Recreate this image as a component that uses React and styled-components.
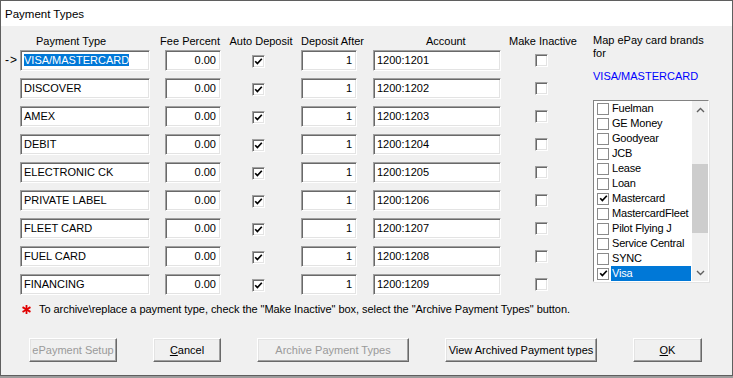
import React from 'react'
import styled, { createGlobalStyle } from 'styled-components'

const GlobalStyle = createGlobalStyle`
    body {
        margin: 0;
        background: #9c9c9c;
        font-family: "Liberation Sans", Arial, sans-serif;
    }
`

const Window = styled.div`
    box-sizing: border-box;
    width: 733px;
    height: 376px;
    border: 1px solid #5f5f5f;
    background: #f0f0f0;
    display: flex;
    flex-direction: column;
    font-size: 11px;
    color: #000;
`

const TitleBar = styled.div`
    height: 25px;
    background: #fff;
    display: flex;
    align-items: center;
    padding-left: 4px;
    font-size: 11.5px;
`

const Top = styled.div`
    display: flex;
    align-items: flex-start;
`

const Table = styled.div`
    display: grid;
    grid-template-columns: 19px 130px 71px 80px 56px 144px 84px;
    grid-template-rows: 24px;
    grid-auto-rows: 28px;
    align-items: start;
`

const Header = styled.div`
    align-self: end;
    line-height: 14px;
    padding-bottom: 2px;
    text-align: ${p => p.$left ? 'left' : 'center'};
    padding-left: ${p => p.$left ? '16px' : '0'};
    white-space: nowrap;
    grid-column: ${p => p.$col};
`

const Arrow = styled.div`
    line-height: 21px;
    padding-left: 4px;
    letter-spacing: 1px;
    font-size: 12px;
`

const Field = styled.div`
    box-sizing: border-box;
    width: ${p => p.$w}px;
    height: 21px;
    justify-self: ${p => p.$end ? 'end' : 'start'};
    background: #fff;
    border-top: 1px solid #a0a0a0;
    border-left: 1px solid #a0a0a0;
    border-bottom: 1px solid #fff;
    border-right: 1px solid #fff;
    box-shadow: inset 1px 1px #696969, inset -1px -1px #e3e3e3;
    padding: 0 4px 0 3px;
    line-height: 19px;
    text-align: ${p => p.$num ? 'right' : 'left'};
    white-space: nowrap;
    overflow: hidden;
`

const Selected = styled.span`
    background: #0078d7;
    color: #fff;
`

const Check = styled.div`
    box-sizing: border-box;
    width: 13px;
    height: 13px;
    background: #fff;
    border-top: 1px solid #a0a0a0;
    border-left: 1px solid #a0a0a0;
    border-bottom: 1px solid #fff;
    border-right: 1px solid #fff;
    box-shadow: inset 1px 1px #696969, inset -1px -1px #e3e3e3;
    display: flex;
    align-items: center;
    justify-content: center;
    justify-self: center;
    margin-top: ${p => p.$mt || 0}px;
    margin-right: ${p => p.$mr || 0}px;
    flex-shrink: 0;
`

const ListCheck = styled(Check)`
    width: 12px;
    height: 12px;
    border: 1px solid #8a8a8a;
    box-shadow: none;
`

const Side = styled.div`
    margin-left: 8px;
    width: 116px;
    padding-top: 8px;
    line-height: 13px;
`

const SelectedName = styled.div`
    color: #0000ff;
    margin-top: 10px;
`

const ListBox = styled.div`
    box-sizing: border-box;
    margin-top: 17px;
    width: 116px;
    height: 182px;
    background: #fff;
    border-top: 1px solid #828282;
    border-left: 1px solid #828282;
    border-bottom: 1px solid #fff;
    border-right: 1px solid #fff;
    box-shadow: 1px 1px 0 #e3e3e3;
    display: flex;
`

const Items = styled.div`
    flex: 1;
    min-width: 0;
`

const Item = styled.div`
    height: 15px;
    display: flex;
    align-items: center;
    padding-left: 3px;
`

const ItemLabel = styled.span`
    flex: 1;
    margin-left: 2px;
    margin-right: 1px;
    padding-left: 1px;
    line-height: 15px;
    white-space: nowrap;
    overflow: hidden;
    letter-spacing: -0.2px;
    background: ${p => p.$sel ? '#0078d7' : 'transparent'};
    color: ${p => p.$sel ? '#fff' : '#000'};
`

const ScrollBar = styled.div`
    width: 16px;
    background: #f0f0f0;
    display: flex;
    flex-direction: column;
    align-items: center;
`

const ScrollArrow = styled.div`
    height: 17px;
    display: flex;
    align-items: center;
    justify-content: center;
`

const Track = styled.div`
    flex: 1;
    width: 100%;
    display: flex;
    flex-direction: column;
`

const Thumb = styled.div`
    margin-top: 46px;
    height: 69px;
    background: #cdcdcd;
`

const Note = styled.div`
    display: flex;
    align-items: center;
    gap: 8px;
    padding-left: 21px;
    line-height: 13px;
    margin-top: 1px;
    letter-spacing: -0.05px;
`

const Buttons = styled.div`
    display: flex;
    gap: 36px;
    padding-left: 28px;
    margin-top: 22px;
`

const Button = styled.div`
    box-sizing: border-box;
    width: ${p => p.$w}px;
    height: 24px;
    background: #f0f0f0;
    border-top: 1px solid #fff;
    border-left: 1px solid #fff;
    border-right: 1px solid #696969;
    border-bottom: 1px solid #696969;
    box-shadow: inset -1px -1px #a0a0a0, inset 1px 1px #e3e3e3;
    display: flex;
    align-items: center;
    justify-content: center;
    font-size: 11px;
    color: ${p => p.$disabled ? '#9a9a9a' : '#000'};
    white-space: nowrap;
`

const Tick = ({ size = 9 }) => (
    <svg width={size} height={size} viewBox="0 0 9 9">
        <path d="M1.2 4.2 L3.4 6.6 L7.8 1.8" fill="none" stroke="#000" strokeWidth="1.7" />
    </svg>
)

const Chevron = ({ up }) => (
    <svg width="9" height="6" viewBox="0 0 9 6">
        <path d={up ? 'M1 5 L4.5 1.5 L8 5' : 'M1 1 L4.5 4.5 L8 1'} fill="none" stroke="#606060" strokeWidth="1.4" />
    </svg>
)

const Asterisk = () => (
    <svg width="9" height="9" viewBox="0 0 9 9">
        <g stroke="#e00000" strokeWidth="1.8" strokeLinecap="square">
            <path d="M4.5 0.8 V8.2" />
            <path d="M1.3 2.6 L7.7 6.4" />
            <path d="M1.3 6.4 L7.7 2.6" />
        </g>
    </svg>
)

const paymentTypes = [
    { name: 'VISA/MASTERCARD', account: '1200:1201' },
    { name: 'DISCOVER', account: '1200:1202' },
    { name: 'AMEX', account: '1200:1203' },
    { name: 'DEBIT', account: '1200:1204' },
    { name: 'ELECTRONIC CK', account: '1200:1205' },
    { name: 'PRIVATE LABEL', account: '1200:1206' },
    { name: 'FLEET CARD', account: '1200:1207' },
    { name: 'FUEL CARD', account: '1200:1208' },
    { name: 'FINANCING', account: '1200:1209' },
]

const brands = [
    { name: 'Fuelman' },
    { name: 'GE Money' },
    { name: 'Goodyear' },
    { name: 'JCB' },
    { name: 'Lease' },
    { name: 'Loan' },
    { name: 'Mastercard', checked: true },
    { name: 'MastercardFleet' },
    { name: 'Pilot Flying J' },
    { name: 'Service Central' },
    { name: 'SYNC' },
    { name: 'Visa', checked: true, selected: true },
]

export default function App() {
    return (
        <>
            <GlobalStyle />
            <Window>
                <TitleBar>Payment Types</TitleBar>
                <Top>
                    <Table>
                        <Header $col={2} $left>Payment Type</Header>
                        <Header $col={3}>&nbsp;&nbsp;&nbsp;Fee Percent</Header>
                        <Header $col={4}>Auto Deposit</Header>
                        <Header $col={5}>Deposit After</Header>
                        <Header $col={6}>&nbsp;&nbsp;&nbsp;&nbsp;&nbsp;&nbsp;&nbsp;&nbsp;&nbsp;&nbsp;&nbsp;Account</Header>
                        <Header $col={7}>Make Inactive</Header>
                        {paymentTypes.map((pt, i) => (
                            <React.Fragment key={pt.name}>
                                <Arrow>{i === 0 ? '->' : ''}</Arrow>
                                <Field $w={130}>{i === 0 ? <Selected>{pt.name}</Selected> : pt.name}</Field>
                                <Field $w={56} $end $num>0.00</Field>
                                <Check $mt={5} $mr={6}><Tick /></Check>
                                <Field $w={56} $num>1</Field>
                                <Field $w={128} $end>{pt.account}</Field>
                                <Check $mt={4} $mr={4} />
                            </React.Fragment>
                        ))}
                    </Table>
                    <Side>
                        Map ePay card brands<br />for
                        <SelectedName>VISA/MASTERCARD</SelectedName>
                        <ListBox>
                            <Items>
                                {brands.map(b => (
                                    <Item key={b.name}>
                                        <ListCheck>{b.checked && <Tick size={9} />}</ListCheck>
                                        <ItemLabel $sel={b.selected}>{b.name}</ItemLabel>
                                    </Item>
                                ))}
                            </Items>
                            <ScrollBar>
                                <ScrollArrow><Chevron up /></ScrollArrow>
                                <Track><Thumb /></Track>
                                <ScrollArrow><Chevron /></ScrollArrow>
                            </ScrollBar>
                        </ListBox>
                    </Side>
                </Top>
                <Note>
                    <Asterisk />
                    <span>To archive\replace a payment type, check the "Make Inactive" box, select the "Archive Payment Types" button.</span>
                </Note>
                <Buttons>
                    <Button $w={88} $disabled>ePayment Setup</Button>
                    <Button $w={68}><span><u>C</u>ancel</span></Button>
                    <Button $w={152} $disabled>Archive Payment Types</Button>
                    <Button $w={152}>View Archived Payment types</Button>
                    <Button $w={69}><span><u>O</u>K</span></Button>
                </Buttons>
            </Window>
        </>
    )
}
